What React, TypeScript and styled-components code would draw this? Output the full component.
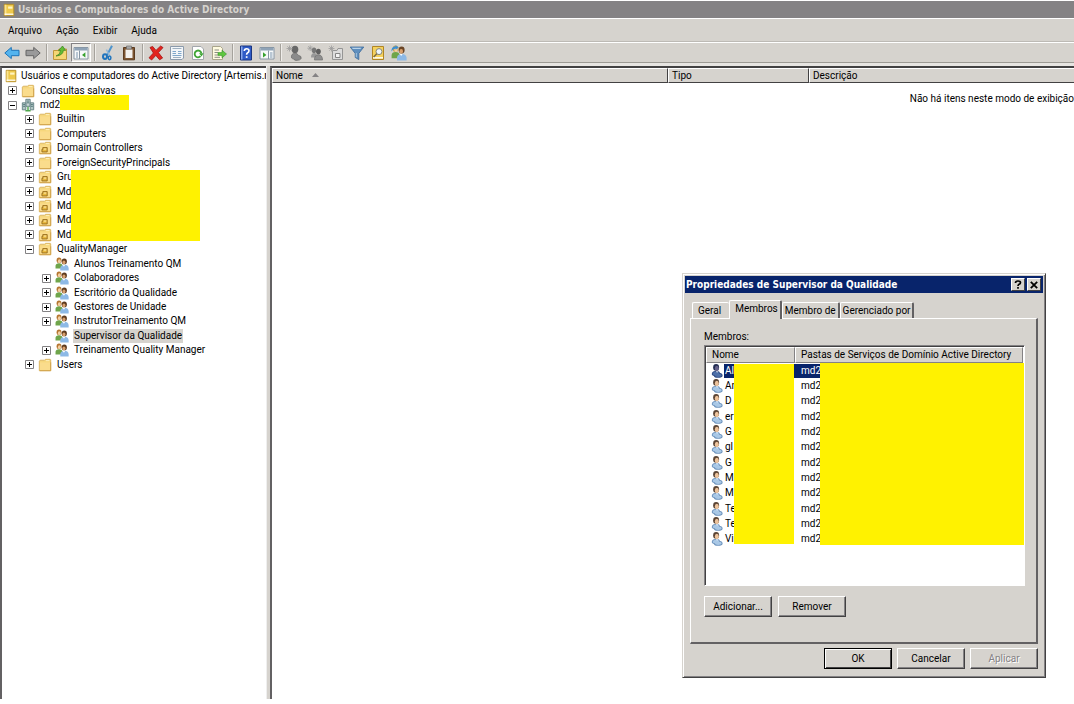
import React from 'react';
import styled, { createGlobalStyle, css } from 'styled-components';

const face = '#d6d3ce';
const shade = '#848284';
const dark = '#424142';
const navy = '#08246b';
const redact = '#fff200';
const titleFont = '"DejaVu Sans Condensed", "DejaVu Sans", sans-serif';
const uiFont = 'Roboto, "Liberation Sans", sans-serif';

const GlobalStyle = createGlobalStyle`
  * { box-sizing: border-box; }
  body { margin: 0; background: #fff; color: #000; font: 10px/14px ${uiFont}; overflow: hidden; }
  button { font: inherit; color: inherit; margin: 0; padding: 0; border: 0; background: none; }
  ul { list-style: none; margin: 0; padding: 0; }
`;

/* ---------- main window ---------- */

const Desktop = styled.div`
  position: relative;
  display: flex;
  flex-direction: column;
  height: 100vh;
  padding: 1px 0 5px;
`;

const TitleBar = styled.header`
  display: flex;
  align-items: center;
  gap: 2px;
  height: 17px;
  padding-left: 2px;
  background: ${shade};
  color: ${face};
  h1 { margin: 0; font: bold 10px/14px ${titleFont}; }
`;

const MenuBar = styled.nav`
  display: flex;
  align-items: center;
  gap: 14px;
  height: 24px;
  padding: 2px 8px 0;
  background: ${face};
  border-top: 1px solid #fff;
  border-bottom: 1px solid #bdbab5;
`;

const ToolBar = styled.div`
  display: flex;
  align-items: center;
  gap: 1px;
  height: 21px;
  padding-left: 2px;
  background: ${face};
  border-top: 1px solid #fff;
  border-bottom: 1px solid #9c9a94;
`;

const ToolButton = styled.button<{ $pressed?: boolean }>`
  display: grid;
  place-items: center;
  width: 20px;
  height: 19px;
  ${p => p.$pressed && css`
    background: #eae8e4;
    border: 1px solid;
    border-color: ${shade} #fff #fff ${shade};
  `}
`;

const ToolDivider = styled.span`
  width: 5px;
  height: 17px;
  border-left: 2px solid transparent;
  background: linear-gradient(90deg, #a5a29c 1px, #efedea 1px 2px, transparent 2px) padding-box;
`;

const Workspace = styled.main`
  display: flex;
  flex: 1;
  min-height: 0;
  border-top: 3px solid #e7e5e2;
`;

const TreePane = styled.section`
  position: relative;
  width: 266px;
  flex: none;
  overflow: hidden;
  background: #fff;
  padding-top: 1px;
  border-top: 2px solid ${dark};
  border-left: 2px solid #636163;
`;

const Splitter = styled.div`
  flex: none;
  width: 4px;
  background: ${face};
  border-left: 1px solid #efefef;
`;

const ListPane = styled.section`
  flex: 1;
  min-width: 0;
  border-top: 2px solid ${dark};
  border-left: 2px solid #636163;
`;

const ColumnTable = styled.table`
  width: 100%;
  table-layout: fixed;
  border-collapse: separate;
  border-spacing: 0;
  th {
    height: 15px;
    padding: 0 4px 0 3px;
    text-align: left;
    font-weight: normal;
    line-height: 13px;
    background: ${face};
    border-top: 1px solid #fff;
    border-left: 1px solid #fff;
    border-right: 1px solid ${dark};
    border-bottom: 1px solid ${dark};
  }
  th:last-child { border-right: 0; }
  td { padding: 9px 0 0; text-align: right; white-space: nowrap; }
`;

const SortMark = styled.svg`
  margin-left: 9px;
  vertical-align: 2px;
`;

/* ---------- tree ---------- */

const Tree = styled.ul`
  display: grid;
  grid-auto-rows: 1fr;
  height: 303px;
`;

const TreeRow = styled.li<{ $depth: number }>`
  display: flex;
  align-items: center;
  gap: ${p => (p.$depth === 0 ? 2 : 4)}px;
  padding-left: ${p => (p.$depth === 0 ? 2 : p.$depth * 17 - 11)}px;
  white-space: nowrap;
`;

const Expander = styled.button<{ $hidden?: boolean }>`
  display: grid;
  width: 9px;
  height: 9px;
  visibility: ${p => (p.$hidden ? 'hidden' : 'visible')};
`;

const NodeLabel = styled.span<{ $selected?: boolean }>`
  padding: 0 1px;
  line-height: 14px;
  background: ${p => (p.$selected ? face : 'transparent')};
`;

const Redaction = styled.div<{ $x: number; $y: number; $w: number; $h: number }>`
  position: absolute;
  left: ${p => p.$x}px;
  top: ${p => p.$y}px;
  width: ${p => p.$w}px;
  height: ${p => p.$h}px;
  background: ${redact};
`;

/* ---------- dialog ---------- */

const Dialog = styled.section`
  position: absolute;
  left: 682px;
  top: 273px;
  width: 364px;
  padding: 2px 2px 8px;
  background: ${face};
  border: 1px solid;
  border-color: ${face} ${dark} ${dark} ${face};
  box-shadow: inset 1px 1px #fff, inset -1px -1px ${shade};
`;

const DialogTitle = styled.header`
  display: flex;
  align-items: center;
  gap: 2px;
  height: 17px;
  padding: 0 2px 0 1px;
  background: ${navy};
  color: #fff;
  h2 { flex: 1; margin: 0; font: bold 10px/14px ${titleFont}; white-space: nowrap; }
`;

const CaptionButton = styled.button`
  display: grid;
  place-items: center;
  width: 14px;
  height: 13px;
  background: ${face};
  border: 1px solid;
  border-color: #fff ${dark} ${dark} #fff;
`;

const TabStrip = styled.div`
  display: flex;
  align-items: flex-end;
  height: 25px;
  padding: 0 7px;
`;

const Tab = styled.button<{ $active?: boolean }>`
  position: relative;
  height: ${p => (p.$active ? 19 : 16)}px;
  margin-bottom: ${p => (p.$active ? -1 : 0)}px;
  padding: ${p => (p.$active ? '0 2px 2px 5px' : '0 2px')};
  background: ${face};
  border: 1px solid #fff;
  border-right: 2px solid #636163;
  border-bottom: 0;
  border-radius: 2px 2px 0 0;
  z-index: ${p => (p.$active ? 1 : 0)};
  &:first-child { padding: 0 8px 0 5px; border-right: 0; }
`;

const TabPanel = styled.div`
  margin: 0 5px;
  padding: 11px 11px 25px 13px;
  border: 1px solid #fff;
  border-right: 2px solid #636163;
  border-bottom: 2px solid #636163;
`;

const FieldLabel = styled.h3`
  margin: 0 0 1px;
  font: inherit;
`;

const MemberBox = styled.div`
  position: relative;
  height: 241px;
  border: 1px solid;
  border-color: ${shade} #fff #fff ${shade};
  box-shadow: inset 1px 1px ${dark};
  background: #fff;
  padding: 1px;
`;

const MemberTable = styled.table`
  width: 100%;
  height: 200px;
  table-layout: fixed;
  border-spacing: 0;
  th {
    height: 16px;
    padding: 0 5px;
    text-align: left;
    font-weight: normal;
    line-height: 14px;
    white-space: nowrap;
    background: ${face};
    border: 1px solid;
    border-color: #fff ${shade} ${shade} #fff;
  }
  td { padding: 0 0 0 4px; line-height: 14px; }
`;

const MemberName = styled.div`
  display: flex;
  align-items: center;
`;

const MemberText = styled.span<{ $selected?: boolean }>`
  flex: 1;
  padding-left: 1px;
  ${p => p.$selected && css`background: ${navy}; color: #fff;`}
`;

const PathText = styled.div<{ $selected?: boolean }>`
  margin-left: -4px;
  padding-left: 6px;
  ${p => p.$selected && css`background: ${navy}; color: #fff;`}
`;

const ButtonRow = styled.div<{ $end?: boolean }>`
  display: flex;
  gap: ${p => (p.$end ? 5 : 6)}px;
  justify-content: ${p => (p.$end ? 'flex-end' : 'flex-start')};
  padding: ${p => (p.$end ? '4px 5px 0' : '10px 0 0')};
`;

const PushButton = styled.button<{ $default?: boolean }>`
  width: 68px;
  height: 21px;
  background: ${face};
  border: 1px solid;
  border-color: #fff ${dark} ${dark} #fff;
  box-shadow: inset -1px -1px ${shade};
  ${p => p.$default && css`
    border-color: #000;
    box-shadow: inset 1px 1px #fff, inset -1px -1px ${dark};
  `}
  &:disabled { color: ${shade}; text-shadow: 1px 1px #fff; }
`;

/* ---------- icons ---------- */

type IconName =
  | 'book' | 'folder' | 'ou' | 'domain' | 'group' | 'user' | 'userSel' | 'back' | 'forward' | 'up' | 'panes'
  | 'cut' | 'paste' | 'delete' | 'props' | 'refresh' | 'export' | 'help' | 'window'
  | 'newUser' | 'newGroup' | 'newOu' | 'filter' | 'find' | 'addGroup';

const folderShape = (
  <>
    <path d="M1.5 3.5 2.5 2.5H7.5L8.5 1.5H14L14.5 2V14.5H1.5Z" fill="#f6d77c" stroke="#d8b05c" />
    <path d="M2.2 5H13.8V13.8H2.2Z" fill="#fadc8c" />
    <path d="M2 14.5H14.5V5" stroke="#cfa047" fill="none" />
    <path d="M9 3H13" stroke="#fff3c8" />
  </>
);

const personPair = (left: string, right: string, a: string, b: string) => (
  <>
    <ellipse cx="4.6" cy="3.8" rx="2.8" ry="3.3" fill={a} />
    <ellipse cx="5" cy="4.8" rx="1.7" ry="2.2" fill="#f3cfa2" />
    <path d="M.6 13.2V10Q.8 7 4.6 7T8.6 10V13.2Z" fill={left} />
    <ellipse cx="10.6" cy="5" rx="3" ry="3.4" fill={b} />
    <ellipse cx="10.2" cy="6.2" rx="1.8" ry="2.2" fill="#d9a06c" />
    <path d="M6 15.5V12.6Q6.4 9.2 10.6 9T15.6 12.6V15.5Z" fill={right} />
    <path d="M8.8 9 10.2 11 11.6 9Z" fill="#fff" />
  </>
);

const person = (body: string, edge: string, hair: string, skin: string) => (
  <>
    <ellipse cx="7" cy="3.9" rx="3.4" ry="3.8" fill={hair} />
    <ellipse cx="7.8" cy="5" rx="2.3" ry="2.9" fill={skin} />
    <path d="M2 11.8Q2 8.4 6 8L9 8Q11.2 8.4 11.4 10.4 14.6 11 14.4 13.4 14 15.8 9.4 15.8 4.8 15.8 4.4 13.6 2 13.4 2 11.8Z" fill={edge} />
    <path d="M3 11.4Q3.2 9.2 6 8.8L8.8 8.8Q10.4 9.2 10.6 11.2 13.4 11.6 13.4 13.2 12.8 14.8 9.4 14.8 5.8 14.8 5.4 12.8 3 12.6 3 11.4Z" fill={body} />
    <path d="M6.6 8 8.2 10.4 9.2 8Z" fill="#fff" fillOpacity=".7" />
  </>
);

const icons: Record<IconName, React.ReactNode> = {
  book: (
    <>
      <path d="M2.5 1.5H13.5V14.5H2.5Z" fill="#eec94c" stroke="#b58a20" />
      <path d="M3 2H5V14H3Z" fill="#fbe491" />
      <path d="M7 4H12V6.5H7Z" fill="#fff4c0" />
      <path d="M3 12.8H13" stroke="#fff" strokeWidth="1.4" />
    </>
  ),
  folder: folderShape,
  ou: (
    <>
      {folderShape}
      <path d="M5.5 7.5H10.5V12.5H4.5V9.5H5.5Z" fill="#e9b93f" stroke="#94691b" />
      <path d="M6.5 9.2H9.5" stroke="#fff5c6" />
    </>
  ),
  domain: (
    <>
      <path d="M5.5 1.5H10.5V9.5H5.5Z" fill="#c8d6d6" stroke="#5f7d80" />
      <path d="M1.5 5.5H5.5V13.5H1.5ZM10.5 5.5H14.5V13.5H10.5Z" fill="#b2c7c6" stroke="#5f7d80" />
      <path d="M6.5 3.5H9.5M6.5 5.5H9.5M2.5 7.5H4.5M11.5 7.5H13.5M2.5 9.5H4.5M11.5 9.5H13.5" stroke="#41696c" />
      <path d="M8 10V14M5 14.5H11" stroke="#4ca64a" strokeWidth="1.6" />
    </>
  ),
  group: personPair('#6fa54b', '#8db9e6', '#b5752f', '#5d3a1e'),
  user: person('#a9c8e6', '#6d93bd', '#5b4434', '#edc39c'),
  userSel: person('#4e70a8', '#2c4a85', '#222c50', '#66618a'),
  back: <path d="M.8 8 7.3 2.4V5.3H15V10.7H7.3V13.6Z" fill="#54b4ee" stroke="#1d74b8" strokeLinejoin="round" />,
  forward: <path d="M15.2 8 8.7 2.4V5.3H1V10.7H8.7V13.6Z" fill="#9a9a9a" stroke="#656565" strokeLinejoin="round" />,
  up: (
    <>
      <path d="M1.5 5.5H6L7 4H14.5V14.5H1.5Z" fill="#f5d774" stroke="#c0973c" />
      <path d="M4 11Q8 10 8.6 5.5L6.4 5.8 10.5 1 13.6 5.4 11.4 5.3Q11 10.5 4 11Z" fill="#63bd35" stroke="#33801b" strokeWidth=".7" />
    </>
  ),
  panes: (
    <>
      <path d="M1 2.5H15V14H1Z" fill="#f7f9fa" stroke="#8796a5" />
      <path d="M1.5 3H14.5V5.5H1.5Z" fill="#8fa3b7" />
      <path d="M6.5 5.5V14" stroke="#8796a5" />
      <path d="M3 8H5M3 10H5M3 12H5" stroke="#7a94ad" />
      <path d="M12.4 7.2V12.6L9 9.9Z" fill="#36a12e" />
    </>
  ),
  cut: (
    <>
      <path d="M12 .8 7 10.2" stroke="#4f94cc" strokeWidth="2" />
      <path d="M6.4 4.6 9.4 10.4" stroke="#8fb6d8" strokeWidth="1.4" />
      <ellipse cx="5" cy="11.6" rx="2" ry="2.4" fill="none" stroke="#1f74bd" strokeWidth="2" />
      <ellipse cx="9.6" cy="12.8" rx="1.3" ry="1.9" fill="none" stroke="#1f74bd" strokeWidth="1.5" />
    </>
  ),
  paste: (
    <>
      <path d="M2.5 2.5H13.5V14.8H2.5Z" fill="#7d5531" stroke="#5b3b20" />
      <path d="M4.5 4.5H11.5V13H4.5Z" fill="#f3f1ee" />
      <path d="M5.5 1H10.5V4H5.5Z" fill="#a9a9a9" stroke="#666" strokeWidth=".6" />
    </>
  ),
  delete: <path d="M2 2.5 4.6 1.4 8 5.4 12.6 1 15 2.6 10.4 7.6 14.6 13 11.6 14.8 7.8 10.4 3.6 15 1 12.8 5.4 8Z" fill="#e3231d" stroke="#a31515" strokeWidth=".8" />,
  props: (
    <>
      <path d="M1.5 1.5H14.5V13L13 14.5H1.5Z" fill="#f3f6f9" stroke="#8b9aab" />
      <path d="M3.5 3.5H12.5M4 12.5H12" stroke="#9fb0c0" />
      <path d="M3.5 6.5H7M3.5 8.5H7M9 6.5H12.5M9 8.5H12.5M3.5 10.5H12.5" stroke="#7fa7cb" />
    </>
  ),
  refresh: (
    <>
      <path d="M2.5 1.5H11L13.5 4V14.5H2.5Z" fill="#fff" stroke="#a3a7ac" />
      <path d="M10.6 11.2A3.4 3.4 0 1 1 11.4 8.2" fill="none" stroke="#3fa535" strokeWidth="1.8" />
      <path d="M9 8.2H13.6L11.6 11.4Z" fill="#3fa535" />
    </>
  ),
  export: (
    <>
      <path d="M1.5 1.5H9.5L11.5 3.5V14.5H1.5Z" fill="#fffbe0" stroke="#a9a58c" />
      <path d="M3.5 5H8M3.5 7.5H7M3.5 10H7M3.5 12.3H9" stroke="#8b8c86" />
      <path d="M7 7.6H11V5.2L15.5 9 11 12.8V10.4H7Z" fill="#5fc73f" stroke="#37912a" strokeWidth=".6" />
    </>
  ),
  help: (
    <>
      <path d="M2.5 1H13.5V15H2.5Z" fill="#2f5bc7" stroke="#1b3680" />
      <path d="M3 1.5H4.5V14.5H3Z" fill="#88a7ec" />
      <path d="M6.3 6Q6.3 3.7 8.6 3.7T11 5.8Q11 7.2 9.4 8 8.6 8.5 8.6 9.8" fill="none" stroke="#fff" strokeWidth="1.6" />
      <path d="M7.8 11.2H9.5V12.9H7.8Z" fill="#fff" />
    </>
  ),
  window: (
    <>
      <path d="M1 2.5H15V14H1Z" fill="#f7f9fa" stroke="#8796a5" />
      <path d="M1.5 3H14.5V5.5H1.5Z" fill="#8fa3b7" />
      <path d="M9.5 5.5V14" stroke="#8796a5" />
      <path d="M11 8H13.5M11 10H13.5M11 12H13.5" stroke="#7a94ad" />
      <path d="M4 7.2V12.6L7.4 9.9Z" fill="#36a12e" />
    </>
  ),
  newUser: (
    <>
      <ellipse cx="9" cy="4.4" rx="3.3" ry="3.7" fill="#686868" />
      <path d="M5.6 13Q4.6 8.6 9 8.2 11.6 8.2 12.4 10.4 15.6 10.6 15.2 13.6 14 15.6 10 15.4 8 15.3 7.6 13.8 6.4 14 5.6 13Z" fill="#8b8b8b" stroke="#5c5c5c" strokeWidth=".6" />
      <path d="M3.5.5V6.5M.5 3.5H6.5M1.4 1.4 5.6 5.6M5.6 1.4 1.4 5.6" stroke="#9c9c9c" strokeWidth=".8" />
    </>
  ),
  newGroup: (
    <>
      <ellipse cx="7" cy="5.2" rx="2.3" ry="2.8" fill="#777" />
      <path d="M4 12.5Q4 8 7.2 8T10 12.5Z" fill="#989898" />
      <ellipse cx="11.4" cy="6.6" rx="2.4" ry="2.8" fill="#5f5f5f" />
      <path d="M7.4 15Q7.4 9.8 11.4 9.8T15.6 15Z" fill="#8f8f8f" stroke="#666" strokeWidth=".6" />
      <path d="M3.2.4V6M.4 3.2H6M1.2 1.2 5.2 5.2M5.2 1.2 1.2 5.2" stroke="#9c9c9c" strokeWidth=".8" />
    </>
  ),
  newOu: (
    <>
      <path d="M4.5 5.5H9L10 3.5H14.5V14.5H4.5Z" fill="#dcdcdc" stroke="#959595" />
      <path d="M7.5 8.5H12V12.5H7.5Z" fill="#f4f4f4" stroke="#858585" />
      <path d="M3.5.5V6.5M.5 3.5H6.5M1.4 1.4 5.6 5.6M5.6 1.4 1.4 5.6" stroke="#9c9c9c" strokeWidth=".8" />
    </>
  ),
  filter: (
    <>
      <path d="M1.2 2H14.8L9.8 8.4V14.6L6.2 12.4V8.4Z" fill="#5f8fbe" stroke="#3f6c9c" strokeWidth=".8" />
      <path d="M2.8 2.8H12.4L11.4 4H3.8Z" fill="#b9d3ea" />
      <path d="M7.3 8V12.2" stroke="#a8c6e0" />
    </>
  ),
  find: (
    <>
      <path d="M2.5 1.5H13.5V14.5H2.5Z" fill="#f5d25e" stroke="#b08524" />
      <path d="M3 12.8H13" stroke="#fff" strokeWidth="1.4" />
      <circle cx="9" cy="6.6" r="3" fill="#eef6fb" stroke="#85847a" />
      <path d="M6.8 8.8 3.6 12" stroke="#7a6a45" strokeWidth="1.5" />
    </>
  ),
  addGroup: (
    <>
      {personPair('#6fa54b', '#8db9e6', '#c9a04a', '#6a4526')}
      <path d="M.4 6.4Q.4 1.4 4.6 1.6V.2L7.8 2.6 4.6 4.8V3.4Q2.2 3.4 .4 6.4Z" fill="#3c8fd4" />
    </>
  ),
};

const Svg = styled.svg`
  display: block;
  flex: none;
`;

function Icon({ name, size = 16 }: { name: IconName; size?: number }) {
  return <Svg width={size} height={size} viewBox="0 0 16 16" aria-hidden="true">{icons[name]}</Svg>;
}

/* ---------- data ---------- */

interface TreeNode {
  depth: number;
  icon: IconName;
  label: string;
  toggle?: 'open' | 'closed';
  selected?: boolean;
}

const nodes: TreeNode[] = [
  { depth: 0, icon: 'book', label: 'Usuários e computadores do Active Directory [Artemis.m' },
  { depth: 1, icon: 'folder', label: 'Consultas salvas', toggle: 'closed' },
  { depth: 1, icon: 'domain', label: 'md2', toggle: 'open' },
  { depth: 2, icon: 'folder', label: 'Builtin', toggle: 'closed' },
  { depth: 2, icon: 'folder', label: 'Computers', toggle: 'closed' },
  { depth: 2, icon: 'ou', label: 'Domain Controllers', toggle: 'closed' },
  { depth: 2, icon: 'folder', label: 'ForeignSecurityPrincipals', toggle: 'closed' },
  { depth: 2, icon: 'ou', label: 'Gru', toggle: 'closed' },
  { depth: 2, icon: 'ou', label: 'Md2', toggle: 'closed' },
  { depth: 2, icon: 'ou', label: 'Md2', toggle: 'closed' },
  { depth: 2, icon: 'ou', label: 'Md2', toggle: 'closed' },
  { depth: 2, icon: 'ou', label: 'Md2', toggle: 'closed' },
  { depth: 2, icon: 'ou', label: 'QualityManager', toggle: 'open' },
  { depth: 3, icon: 'group', label: 'Alunos Treinamento QM' },
  { depth: 3, icon: 'group', label: 'Colaboradores', toggle: 'closed' },
  { depth: 3, icon: 'group', label: 'Escritório da Qualidade', toggle: 'closed' },
  { depth: 3, icon: 'group', label: 'Gestores de Unidade', toggle: 'closed' },
  { depth: 3, icon: 'group', label: 'InstrutorTreinamento QM', toggle: 'closed' },
  { depth: 3, icon: 'group', label: 'Supervisor da Qualidade', selected: true },
  { depth: 3, icon: 'group', label: 'Treinamento Quality Manager', toggle: 'closed' },
  { depth: 2, icon: 'folder', label: 'Users', toggle: 'closed' },
];

const tools: ({ icon: IconName; label: string; pressed?: boolean } | null)[] = [
  { icon: 'back', label: 'Voltar' },
  { icon: 'forward', label: 'Avançar' },
  null,
  { icon: 'up', label: 'Um nível acima' },
  { icon: 'panes', label: 'Mostrar árvore', pressed: true },
  null,
  { icon: 'cut', label: 'Recortar' },
  { icon: 'paste', label: 'Colar' },
  null,
  { icon: 'delete', label: 'Excluir' },
  { icon: 'props', label: 'Propriedades' },
  { icon: 'refresh', label: 'Atualizar' },
  { icon: 'export', label: 'Exportar lista' },
  null,
  { icon: 'help', label: 'Ajuda' },
  { icon: 'window', label: 'Painel de ações' },
  null,
  { icon: 'newUser', label: 'Novo usuário' },
  { icon: 'newGroup', label: 'Novo grupo' },
  { icon: 'newOu', label: 'Nova unidade' },
  { icon: 'filter', label: 'Filtro' },
  { icon: 'find', label: 'Localizar' },
  { icon: 'addGroup', label: 'Adicionar a um grupo' },
];

const members = ['Al', 'An', 'D', 'er', 'G', 'gl', 'G', 'M', 'M', 'Te', 'Te', 'Vi'];
const tabs = ['Geral', 'Membros', 'Membro de', 'Gerenciado por'];

/* ---------- components ---------- */

function TreeItem({ node }: { node: TreeNode }) {
  return (
    <TreeRow $depth={node.depth}>
      {node.depth > 0 && (
        <Expander $hidden={!node.toggle} aria-label={`Expandir ${node.label}`}>
          <svg width="9" height="9" viewBox="0 0 9 9">
            <path d="M.5.5H8.5V8.5H.5Z" fill="#fff" stroke={shade} />
            <path d={node.toggle === 'open' ? 'M2 4.5H7' : 'M2 4.5H7M4.5 2V7'} stroke="#000" />
          </svg>
        </Expander>
      )}
      <Icon name={node.icon} size={14} />
      <NodeLabel $selected={node.selected}>{node.label}</NodeLabel>
    </TreeRow>
  );
}

function PropertiesDialog() {
  return (
    <Dialog role="dialog" aria-labelledby="dialog-title">
      <DialogTitle>
        <h2 id="dialog-title">Propriedades de Supervisor da Qualidade</h2>
        <CaptionButton aria-label="Ajuda">
          <svg width="8" height="9" viewBox="0 0 8 9">
            <path d="M1.5 3Q1.5 1 4 1T6.5 2.8Q6.5 3.8 4.8 4.4 4 4.8 4 6M4 7V8.8" fill="none" stroke="#000" strokeWidth="1.7" />
          </svg>
        </CaptionButton>
        <CaptionButton aria-label="Fechar">
          <svg width="8" height="8" viewBox="0 0 8 8"><path d="M.8.8 7.2 7.2M7.2.8.8 7.2" stroke="#000" strokeWidth="1.8" /></svg>
        </CaptionButton>
      </DialogTitle>
      <TabStrip role="tablist">
        {tabs.map(t => (
          <Tab key={t} role="tab" $active={t === 'Membros'} aria-selected={t === 'Membros'}>{t}</Tab>
        ))}
      </TabStrip>
      <TabPanel role="tabpanel">
        <FieldLabel>Membros:</FieldLabel>
        <MemberBox>
          <MemberTable>
            <colgroup><col style={{ width: 89 }} /><col /></colgroup>
            <thead>
              <tr><th>Nome</th><th>Pastas de Serviços de Domínio Active Directory</th></tr>
            </thead>
            <tbody>
              {members.map((m, i) => (
                <tr key={i}>
                  <td>
                    <MemberName>
                      <Icon name={i === 0 ? 'userSel' : 'user'} size={14} />
                      <MemberText $selected={i === 0}>{m}</MemberText>
                    </MemberName>
                  </td>
                  <td><PathText $selected={i === 0}>md2</PathText></td>
                </tr>
              ))}
            </tbody>
          </MemberTable>
          <Redaction $x={29} $y={18} $w={60} $h={180} />
          <Redaction $x={115} $y={17} $w={204} $h={182} />
        </MemberBox>
        <ButtonRow>
          <PushButton>Adicionar...</PushButton>
          <PushButton>Remover</PushButton>
        </ButtonRow>
      </TabPanel>
      <ButtonRow $end>
        <PushButton $default>OK</PushButton>
        <PushButton>Cancelar</PushButton>
        <PushButton disabled>Aplicar</PushButton>
      </ButtonRow>
    </Dialog>
  );
}

export default function App() {
  return (
    <>
      <GlobalStyle />
      <Desktop>
        <TitleBar>
          <Icon name="book" size={14} />
          <h1>Usuários e Computadores do Active Directory</h1>
        </TitleBar>
        <MenuBar>
          {['Arquivo', 'Ação', 'Exibir', 'Ajuda'].map(m => <button key={m}>{m}</button>)}
        </MenuBar>
        <ToolBar role="toolbar">
          {tools.map((t, i) => t
            ? <ToolButton key={i} $pressed={t.pressed} aria-label={t.label}><Icon name={t.icon} /></ToolButton>
            : <ToolDivider key={i} />)}
        </ToolBar>
        <Workspace>
          <TreePane>
            <Tree>
              {nodes.map((n, i) => <TreeItem key={i} node={n} />)}
            </Tree>
            <Redaction $x={58} $y={27} $w={69} $h={15} />
            <Redaction $x={69} $y={102} $w={129} $h={71} />
          </TreePane>
          <Splitter />
          <ListPane>
            <ColumnTable>
              <colgroup><col style={{ width: 396 }} /><col style={{ width: 141 }} /><col /></colgroup>
              <thead>
                <tr>
                  <th>Nome<SortMark width="7" height="4" viewBox="0 0 7 4"><path d="M0 4 3.5 0 7 4Z" fill={shade} /></SortMark></th>
                  <th>Tipo</th>
                  <th>Descrição</th>
                </tr>
              </thead>
              <tbody>
                <tr><td colSpan={3}>Não há itens neste modo de exibição</td></tr>
              </tbody>
            </ColumnTable>
          </ListPane>
        </Workspace>
        <PropertiesDialog />
      </Desktop>
    </>
  );
}
